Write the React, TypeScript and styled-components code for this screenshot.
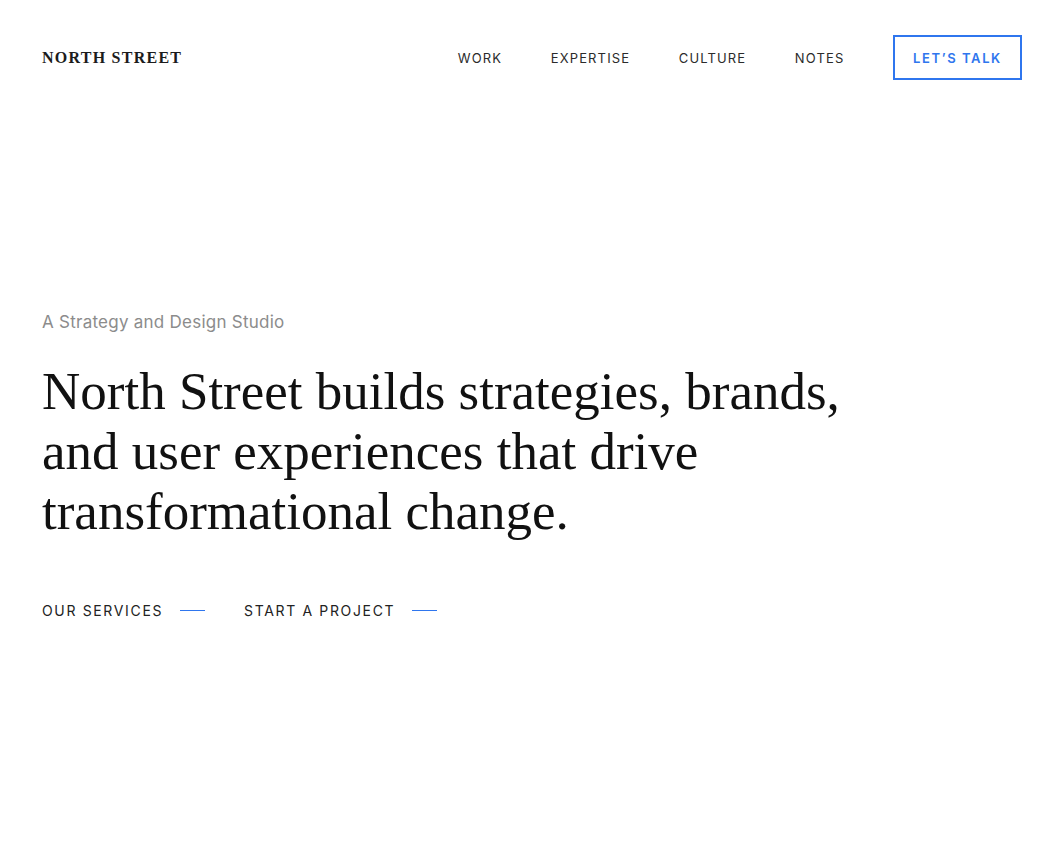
import React from "react";
import styled, { createGlobalStyle } from "styled-components";

const Global = createGlobalStyle`
  html, body { margin: 0; padding: 0; background: #fff; }
  body { font-family: "Inter", "Roboto", sans-serif; color: #1a1a1a; }
  * { box-sizing: border-box; }
`;

const Page = styled.div`
  width: 1057px;
  min-height: 852px;
  padding: 0 35px 0 42px;
`;

const Header = styled.header`
  display: flex;
  align-items: center;
  justify-content: space-between;
  height: 115px;
`;

const Logo = styled.div`
  font-family: "Liberation Serif", serif;
  font-weight: 700;
  font-size: 16px;
  letter-spacing: 1.25px;
  color: #1c1c1c;
`;

const Nav = styled.nav`
  display: flex;
  align-items: center;
`;

const NavLink = styled.a`
  font-family: "Inter", "Roboto", sans-serif;
  font-size: 13px;
  letter-spacing: 1.15px;
  color: #2b2b2b;
  text-transform: uppercase;
  text-decoration: none;
  margin-right: 48.5px;
`;

const TalkButton = styled.a`
  display: flex;
  align-items: center;
  justify-content: center;
  width: 129px;
  height: 45px;
  border: 2px solid #2f76ee;
  color: #2f76ee;
  font-family: "Inter", "Roboto", sans-serif;
  font-size: 13px;
  font-weight: 600;
  letter-spacing: 1.6px;
  text-decoration: none;
`;

const Hero = styled.section`
  padding-top: 195px;
`;

const Eyebrow = styled.p`
  margin: 0;
  font-family: "Inter", "Roboto", sans-serif;
  font-size: 17px;
  letter-spacing: 0.25px;
  color: #8c8c8c;
  line-height: 24px;
`;

const Headline = styled.h1`
  margin: 27px 0 0;
  font-family: "Liberation Serif", serif;
  font-weight: 400;
  font-size: 53px;
  line-height: 60px;
  letter-spacing: 0;
  color: #111;
  max-width: 830px;
`;

const Actions = styled.div`
  display: flex;
  align-items: center;
  gap: 39px;
  margin-top: 61px;
`;

const ActionLink = styled.a`
  display: flex;
  align-items: center;
  gap: 17px;
  font-family: "Inter", "Roboto", sans-serif;
  font-size: 14px;
  letter-spacing: 1.65px;
  color: #222;
  text-decoration: none;
  text-transform: uppercase;
`;

const Dash = styled.span`
  display: block;
  width: 25px;
  height: 1px;
  background: #2f76ee;
`;

export default function App() {
  return (
    <>
      <Global />
      <Page>
        <Header>
          <Logo>NORTH STREET</Logo>
          <Nav>
            <NavLink href="#">Work</NavLink>
            <NavLink href="#">Expertise</NavLink>
            <NavLink href="#">Culture</NavLink>
            <NavLink href="#">Notes</NavLink>
            <TalkButton href="#">LET’S TALK</TalkButton>
          </Nav>
        </Header>
        <Hero>
          <Eyebrow>A Strategy and Design Studio</Eyebrow>
          <Headline>
            North Street builds strategies, brands, and user experiences that drive
            transformational change.
          </Headline>
          <Actions>
            <ActionLink href="#">Our Services<Dash /></ActionLink>
            <ActionLink href="#">Start a Project<Dash /></ActionLink>
          </Actions>
        </Hero>
      </Page>
    </>
  );
}
